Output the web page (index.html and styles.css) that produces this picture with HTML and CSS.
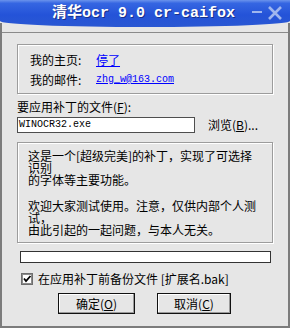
FILE: index.html
```html
<!DOCTYPE html>
<html lang="zh">
<head>
  <meta charset="UTF-8">
  <title>清华ocr 9.0 cr-caifox</title>
  <link rel="stylesheet" href="styles.css">
</head>
<body>

<div class="window">
  <div class="titlebar">
    <span class="title">清华<span class="mono">ocr 9.0 cr-caifox</span></span>
    <span class="controls">
      <svg width="36" height="16" viewBox="0 0 36 16">
        <rect x="2" y="6" width="10" height="2" fill="#9fb6ee"/>
        <path d="M19 2 L31 14 M31 2 L19 14" stroke="#9fb6ee" stroke-width="2.6" fill="none"/>
      </svg>
    </span>
  </div>

  <div class="client">
    <div class="content">
      <div class="group info">
        <div class="row"><span class="label">我的主页:</span><a href="#">停了</a></div>
        <div class="row"><span class="label">我的邮件:</span><a href="#" class="en">zhg_w@163.com</a></div>
      </div>

      <div class="file-label">要应用补丁的文件(<u>F</u>):</div>
      <div class="file-row">
        <div class="input en">WINOCR32.exe</div>
        <span class="browse">浏览(<u>B</u>)...</span>
      </div>

      <div class="group notes">
        <p>这是一个[超级完美]的补丁，实现了可选择<br>识别<br>的字体等主要功能。</p>
        <p>欢迎大家测试使用。注意，仅供内部个人测<br>试，<br>由此引起的一起问题，与本人无关。</p>
      </div>

      <div class="progress"></div>

      <label class="check">
        <svg width="12" height="12" viewBox="0 0 12 12">
          <rect x="0.5" y="0.5" width="11" height="11" fill="#fff" stroke="#6e6e6e"/>
          <rect x="1.5" y="1.5" width="9" height="9" fill="none" stroke="#8c8c8c"/>
          <path d="M3 5.5 L5 8 L9.5 3" stroke="#000" stroke-width="1.8" fill="none"/>
        </svg>
        在应用补丁前备份文件 [扩展名.bak]
      </label>

      <div class="buttons">
        <button class="ok">确定(<u>O</u>)</button>
        <button class="cancel">取消(<u>C</u>)</button>
      </div>
    </div>
  </div>
</div>

</body>
</html>
```

FILE: styles.css
```css
body {
  margin: 0;
  font-family: "Noto Sans CJK SC", sans-serif;
  font-size: 12px;
  color: #000;
  background: #e6e6e6;
}

.window {
  width: 290px;
  height: 328px;
  background: #e6e6e6;
  display: flex;
  flex-direction: column;
}

.titlebar {
  height: 27px;
  display: flex;
  align-items: center;
  padding: 0 4px 2px 52px;
  background: linear-gradient(#6b93ec 0, #3566e2 12%, #2453d8 55%, #2a57d2 100%);
  border-radius: 0 0 50% 50% / 0 0 6px 6px;
  box-sizing: border-box;
  position: relative;
  z-index: 1;
}

.title {
  color: #fff;
  font-weight: bold;
  font-size: 15px;
  line-height: 18px;
  text-shadow: 1px 1px 0 #17308a;
}

.title .mono {
  font-family: "Liberation Mono", monospace;
}

.controls {
  margin-left: auto;
  display: flex;
}

.client {
  margin-top: -4px;
  flex: 1;
  border: 2px solid #7c7c7c;
  border-top: none;
  padding-top: 9px;
}

.content {
  border-top: 1px solid #8a8a8a;
  padding: 0 15px;
}

.en {
  font-family: "Liberation Mono", monospace;
  font-size: 10px;
}

.group {
  border: 1px solid #9c9c9c;
  box-shadow: 1px 1px 0 #fff, inset 1px 1px 0 #fff;
  box-sizing: border-box;
}

.info {
  margin-top: 11px;
  height: 50px;
  padding: 4px 12px 0;
}

.row {
  display: flex;
  align-items: center;
  height: 20px;
}

.label {
  width: 66px;
}

a {
  color: #0000ff;
}

.file-label {
  margin-top: 7px;
  line-height: 12px;
}

.file-row {
  margin-top: 3px;
  display: flex;
  align-items: center;
}

.input {
  width: 178px;
  height: 16px;
  box-sizing: border-box;
  border: 1px solid #4e4e4e;
  background: #fff;
  padding-left: 1px;
  line-height: 14px;
}

.browse {
  margin-left: 13px;
}

.notes {
  margin-top: 9px;
  height: 101px;
  padding: 7px 10px 0;
  white-space: nowrap;
}

.notes p {
  margin: 0 0 14px;
  line-height: 12px;
}

.progress {
  margin: 8px 0 0 3px;
  width: 251px;
  height: 12px;
  box-sizing: border-box;
  border: 1px solid #333;
  background: #fff;
}

.check {
  margin: 10px 0 0 4px;
  height: 12px;
  display: flex;
  align-items: center;
  gap: 5px;
  line-height: 12px;
}

.buttons {
  margin: 8px 0 0 41px;
  display: flex;
  gap: 22px;
}

button {
  height: 21px;
  font-family: "Noto Sans CJK SC", sans-serif;
  font-size: 12px;
  padding: 0;
  border: 1px solid #111;
  background: #e6e6e6;
  box-shadow: inset -1px -1px 0 #9a9a9a, inset 1px 1px 0 #fff;
}

.ok {
  width: 77px;
}

.cancel {
  width: 74px;
}
```
